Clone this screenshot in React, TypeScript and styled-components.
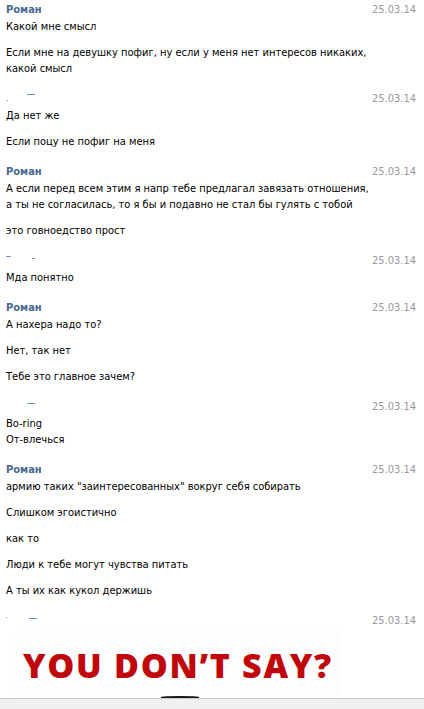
import React from 'react';
import styled, { createGlobalStyle } from 'styled-components';

const GlobalStyle = createGlobalStyle`
  html, body {
    margin: 0;
    padding: 0;
    background: #ffffff;
    overflow: hidden;
  }
  body {
    font-family: Tahoma, "DejaVu Sans Condensed", "Liberation Sans", sans-serif;
    font-size: 11px;
    color: #000000;
  }
`;

const Page = styled.div`
  width: 424px;
  height: 709px;
  display: flex;
  flex-direction: column;
  overflow: hidden;
  padding-top: 2px;
  box-sizing: border-box;
`;

const Message = styled.div<{ $last?: boolean }>`
  padding: 0 8px ${(p) => (p.$last ? 0 : 14)}px 6px;
`;

const Header = styled.div`
  display: flex;
  align-items: center;
  justify-content: space-between;
  height: 16px;
  line-height: 16px;
`;

const Author = styled.span`
  font-weight: bold;
  color: #45688e;
`;

const Hidden = styled.span`
  display: flex;
  align-items: flex-start;
  height: 16px;
  width: 40px;
`;

const Speck = styled.i<{ $x: number; $y: number; $w: number }>`
  display: block;
  margin-left: ${(p) => p.$x}px;
  margin-top: ${(p) => p.$y}px;
  width: ${(p) => p.$w}px;
  height: 1px;
  background: #4a77b5;
  opacity: 0.8;
`;

const Date = styled.span`
  color: #999999;
`;

const Body = styled.div`
  margin-top: 1px;
  display: flex;
  flex-direction: column;
  gap: 10px;
`;

const Para = styled.div`
  line-height: 16px;
`;

const Meme = styled.div`
  margin-top: 1px;
  margin-left: 15px;
  width: 326px;
  height: 68px;
  background: #fdfdfd;
  display: flex;
  flex-direction: column;
  align-items: flex-start;
`;

const MemeText = styled.div`
  font-family: "Open Sans", "Liberation Sans", sans-serif;
  font-weight: 800;
  font-size: 34px;
  line-height: 34px;
  color: #c0070c;
  margin: 18px 0 0 8px;
  letter-spacing: 1.7px;
  white-space: nowrap;
`;

const Head = styled.div`
  margin: auto 0 0 146px;
  width: 38px;
  height: 2px;
  border-radius: 50% 50% 0 0;
  background: #151515;
`;

const Footer = styled.div`
  flex: 1;
  border-top: 1px solid #c9ced6;
  background: #f0f0f0;
`;

type Msg = {
  name?: string;
  marks?: [number, number, number][];
  paras: string[][];
};

const messages: Msg[] = [
  {
    name: 'Роман',
    paras: [
      ['Какой мне смысл'],
      ['Если мне на девушку пофиг, ну если у меня нет интересов никаких,', 'какой смысл'],
    ],
  },
  {
    marks: [[21, 3, 8], [-28, 9, 1]],
    paras: [['Да нет же'], ['Если поцу не пофиг на меня']],
  },
  {
    name: 'Роман',
    paras: [
      [
        'А если перед всем этим я напр тебе предлагал завязать отношения,',
        'а ты не согласилась, то я бы и подавно не стал бы гулять с тобой',
      ],
      ['это говноедство прост'],
    ],
  },
  {
    marks: [[0, 3, 5], [21, 5, 3]],
    paras: [['Мда понятно']],
  },
  {
    name: 'Роман',
    paras: [['А нахера надо то?'], ['Нет, так нет'], ['Тебе это главное зачем?']],
  },
  {
    marks: [[21, 4, 8]],
    paras: [['Bo-ring', 'От-влечься']],
  },
  {
    name: 'Роман',
    paras: [
      ['армию таких "заинтересованных" вокруг себя собирать'],
      ['Слишком эгоистично'],
      ['как то'],
      ['Люди к тебе могут чувства питать'],
      ['А ты их как кукол держишь'],
    ],
  },
];

const Who: React.FC<{ msg: Msg }> = ({ msg }) =>
  msg.name ? (
    <Author>{msg.name}</Author>
  ) : (
    <Hidden>
      {(msg.marks || []).map(([x, y, w], i) => (
        <Speck key={i} $x={x} $y={y} $w={w} />
      ))}
    </Hidden>
  );

const App: React.FC = () => {
  return (
    <>
      <GlobalStyle />
      <Page>
        {messages.map((msg, i) => (
          <Message key={i}>
            <Header>
              <Who msg={msg} />
              <Date>25.03.14</Date>
            </Header>
            <Body>
              {msg.paras.map((lines, j) => (
                <Para key={j}>
                  {lines.map((l, k) => (
                    <div key={k}>{l}</div>
                  ))}
                </Para>
              ))}
            </Body>
          </Message>
        ))}
        <Message $last>
          <Header>
            <Who msg={{ marks: [[0, 4, 1], [22, 5, 8]], paras: [] }} />
            <Date>25.03.14</Date>
          </Header>
        </Message>
        <Meme>
          <MemeText>YOU DON’T SAY?</MemeText>
          <Head />
        </Meme>
        <Footer />
      </Page>
    </>
  );
};

export default App;
